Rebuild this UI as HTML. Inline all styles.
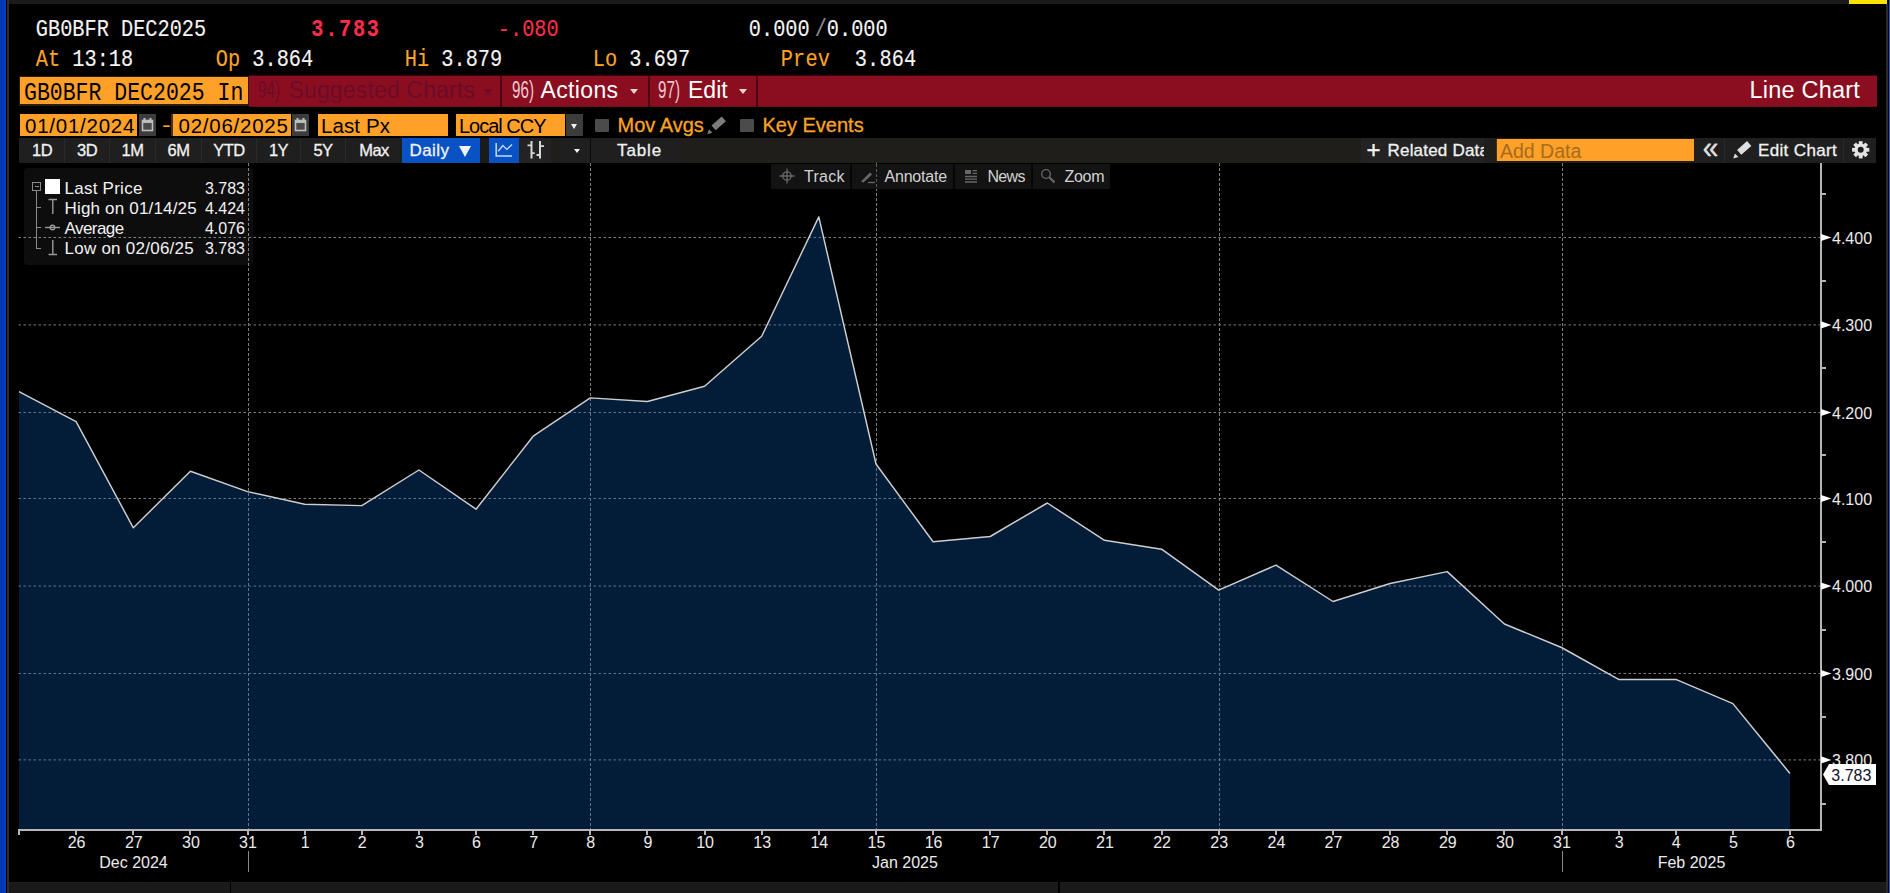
<!DOCTYPE html>
<html lang="en">
<head>
<meta charset="utf-8">
<title>GB0BFR DEC2025 Index - Line Chart</title>
<style>
html,body{margin:0;padding:0;background:#000;}
body{width:1890px;height:893px;position:relative;overflow:hidden;font-family:"Liberation Sans",sans-serif;color:#fff;}
.abs{position:absolute;}
.mono{-webkit-text-stroke:0.12px;font-family:"Liberation Mono",monospace;font-size:20.3px;line-height:24px;height:24px;white-space:pre;position:absolute;transform:scaleY(1.2);transform-origin:0 100%;letter-spacing:0;}
.w{color:#f4f4f4;}
.o{color:#fba425;}
.r{color:#ff2d4d;}
.g{color:#8a8a8a;}
.ob{position:absolute;background:#ffa028;color:#000;white-space:pre;overflow:hidden;}
.tb{position:absolute;top:138px;height:25px;background:#1f1f1f;color:#f2f2f2;font-size:16.5px;line-height:25px;text-align:center;letter-spacing:-0.5px;white-space:pre;box-sizing:border-box;border-left:1px solid #2a2a2a;-webkit-text-stroke:0.3px #f2f2f2;}
.dt{font-size:20.5px;line-height:23px;box-sizing:border-box;letter-spacing:0.75px;}
.cb{width:14px;height:13.5px;background:#4b4b4b;border-radius:1px;}
.bolder{-webkit-text-stroke:0.3px #fba425;}
.sep{position:absolute;background:#000;}
.rt{position:absolute;top:74.5px;height:31px;line-height:30px;font-size:23px;color:#fff;white-space:pre;}
.num{transform:scaleX(0.66);transform-origin:0 50%;color:#ecc9cf;}
.tri{position:absolute;width:0;height:0;border-left:4px solid transparent;border-right:4px solid transparent;border-top:5.5px solid #ead4d8;}
.ct{position:absolute;top:165px;height:25px;background:#131313;color:#d2d2d2;font-size:16px;line-height:24px;white-space:pre;}
.lg{position:absolute;font-size:17px;line-height:20px;color:#f2f2f2;white-space:pre;}
.lgv{position:absolute;font-size:16px;line-height:20px;color:#f2f2f2;white-space:pre;text-align:right;width:60px;left:185px;}
</style>
</head>
<body>
<!-- window frame -->
<div class="abs" style="left:0;top:0;width:6px;height:893px;background:linear-gradient(90deg,#0036b0,#003cc0);"></div>
<div class="abs" style="left:7px;top:0;width:2px;height:893px;background:#2c2c2c;"></div>
<div class="abs" style="left:9px;top:0;width:1877px;height:4px;background:#1a1a1a;"></div>
<div class="abs" style="left:1849px;top:0;width:38px;height:4px;background:#ffe100;"></div>
<div class="abs" style="left:1886px;top:4px;width:2px;height:889px;background:#2b2b2b;"></div>
<div class="abs" style="left:1889px;top:0;width:1px;height:893px;background:#1060e0;"></div>
<div class="abs" style="left:9px;top:882px;width:1877px;height:11px;background:#1a1a1a;border-top:1px solid #1f1f1f;box-sizing:border-box;"></div>
<div class="sep" style="left:230px;top:882px;width:1px;height:11px;"></div>
<div class="sep" style="left:1058px;top:882px;width:2px;height:11px;"></div>

<!-- header quote lines -->
<div id="h1" class="mono w" style="left:35.8px;top:20px;">GB0BFR DEC2025</div>
<div id="h2" class="mono r" style="left:311.3px;top:20px;font-weight:bold;letter-spacing:1.7px;">3.783</div>
<div id="h3" class="mono r" style="left:497.8px;top:20px;">-.080</div>
<div id="h4" class="mono w" style="left:748.8px;top:20px;">0.000</div>
<div id="h5" class="mono g" style="left:814.8px;top:20px;">/</div>
<div id="h6" class="mono w" style="left:826.8px;top:20px;">0.000</div>
<div id="h7" class="mono" style="left:35.8px;top:50px;"><span class="o">At </span><span class="w">13:18</span></div>
<div id="h8" class="mono" style="left:215.8px;top:50px;"><span class="o">Op </span><span class="w">3.864</span></div>
<div id="h9" class="mono" style="left:404.8px;top:50px;"><span class="o">Hi </span><span class="w">3.879</span></div>
<div id="h10" class="mono" style="left:592.8px;top:50px;"><span class="o">Lo </span><span class="w">3.697</span></div>
<div id="h11" class="mono" style="left:780.8px;top:50px;letter-spacing:0.15px;"><span class="o">Prev  </span><span class="w">3.864</span></div>

<!-- red command bar -->
<div class="abs" style="left:249px;top:75px;width:1628px;height:32px;background:#8a0e20;border-top:1px solid #3a060e;border-bottom:1px solid #6c0b19;box-sizing:border-box;"></div>
<div class="abs" style="left:19px;top:76px;width:230px;height:30px;background:#2e1c06;"></div>
<div class="ob" style="left:20px;top:77px;width:228px;height:27px;"></div>
<div id="sec" class="mono" style="-webkit-text-stroke:0;left:24px;top:83px;font-size:21.5px;color:#000;">GB0BFR DEC2025 In</div>
<div class="rt num" id="n94" style="left:258px;color:#6a0b28;">94)</div>
<div class="rt" id="t94" style="left:288.5px;color:#6a0b28;letter-spacing:0.15px;">Suggested Charts</div>
<div class="tri" style="left:483.5px;top:88.5px;border-top-color:#6a0b28;"></div>
<div class="sep" style="left:500px;top:76px;width:2px;height:31px;background:#4a0812;"></div>
<div class="rt num" id="n96" style="left:511.5px;">96)</div>
<div class="rt" id="t96" style="left:540.5px;letter-spacing:0.35px;">Actions</div>
<div class="tri" style="left:630px;top:88.5px;"></div>
<div class="sep" style="left:647.5px;top:76px;width:2px;height:31px;background:#4a0812;"></div>
<div class="rt num" id="n97" style="left:658px;">97)</div>
<div class="rt" id="t97" style="left:688px;letter-spacing:0px;">Edit</div>
<div class="tri" style="left:738.5px;top:88.5px;"></div>
<div class="sep" style="left:756px;top:76px;width:2px;height:31px;background:#4a0812;"></div>
<div class="rt" id="rlc" style="left:1749.5px;font-size:23.5px;letter-spacing:0.2px;">Line Chart</div>

<!-- parameter row -->
<div class="ob dt" id="d1" style="left:20px;top:114px;width:117px;height:22px;padding-left:5px;">01/01/2024</div>
<div class="abs" style="left:139px;top:114px;width:17px;height:22px;background:#3c3c3c;">
<svg width="17" height="22" viewBox="0 0 17 22"><rect x="3.5" y="6.5" width="10" height="10" fill="#4a4a4a" stroke="#bdbdbd" stroke-width="1.6"/><rect x="3" y="6" width="11" height="3" fill="#bdbdbd"/><rect x="4.5" y="4" width="2" height="3" fill="#bdbdbd"/><rect x="10.5" y="4" width="2" height="3" fill="#bdbdbd"/></svg></div>
<div class="abs o" style="left:162px;top:113px;font-size:21px;line-height:23px;transform:scaleX(1.25);transform-origin:0 0;">-</div>
<div class="abs" style="left:171px;top:114px;width:2px;height:22px;background:#4a2f08;"></div>
<div class="ob dt" id="d2" style="left:172.500px;top:114px;width:118px;height:22px;padding-left:6px;">02/06/2025</div>
<div class="abs" style="left:292px;top:114px;width:17px;height:22px;background:#3c3c3c;">
<svg width="17" height="22" viewBox="0 0 17 22"><rect x="3.5" y="6.5" width="10" height="10" fill="#4a4a4a" stroke="#bdbdbd" stroke-width="1.6"/><rect x="3" y="6" width="11" height="3" fill="#bdbdbd"/><rect x="4.5" y="4" width="2" height="3" fill="#bdbdbd"/><rect x="10.5" y="4" width="2" height="3" fill="#bdbdbd"/></svg></div>
<div class="ob" id="lp" style="left:317.500px;top:114px;width:130px;height:22px;font-size:20.5px;line-height:23px;padding-left:3.5px;box-sizing:border-box;letter-spacing:0.1px;">Last Px</div>
<div class="ob" id="lc" style="left:455.500px;top:114px;width:109.500px;height:22px;font-size:20px;line-height:24.500px;padding-left:3.5px;box-sizing:border-box;letter-spacing:-1px;">Local CCY</div>
<div class="abs" style="left:566px;top:114px;width:17px;height:22px;background:#3c3c3c;"><div class="tri" style="left:4.800px;top:9.500px;border-top-color:#f4f4f4;border-left-width:3.700px;border-right-width:3.700px;border-top-width:5px;"></div></div>
<div class="abs cb" style="left:595px;top:118.500px;"></div>
<div class="abs o bolder" id="ma" style="left:617.500px;top:113px;font-size:20px;line-height:24px;white-space:pre;">Mov Avgs</div>
<svg class="abs" style="left:705px;top:115px;" width="22" height="20" viewBox="0 0 22 20"><path d="M8.600 12.800 L18.800 3.900" stroke="#7c7c7c" stroke-width="6.400" fill="none"/><path d="M2.300 19.200 L3.900 14.200 L7.400 17.700 Z" fill="#7c7c7c"/></svg>
<div class="abs cb" style="left:740px;top:118.500px;"></div>
<div class="abs o bolder" id="ke" style="left:762.500px;top:113px;font-size:20px;line-height:24px;white-space:pre;">Key Events</div>

<!-- period toolbar -->
<div class="abs" style="left:19px;top:138px;width:1857px;height:25px;background:#201e1b;"></div>
<div class="abs" style="left:19px;top:138px;width:383px;height:25px;background:#1f1f1f;"></div>
<div class="tb" style="left:20px;width:44px;border-left:none;">1D</div>
<div class="tb" style="left:64px;width:45px;">3D</div>
<div class="tb" style="left:109px;width:46px;">1M</div>
<div class="tb" style="left:155px;width:46px;">6M</div>
<div class="tb" style="left:201px;width:55px;">YTD</div>
<div class="tb" style="left:256px;width:44px;">1Y</div>
<div class="tb" style="left:300px;width:45px;">5Y</div>
<div class="tb" style="left:345px;width:57px;">Max</div>
<div class="tb" id="daily" style="left:402px;width:78px;background:#0852c4;border:none;text-align:left;font-size:17px;letter-spacing:0.4px;"><span style="margin-left:7.500px;">Daily</span><div class="tri" style="left:57.300px;top:7.500px;border-top-color:#f4f4f4;border-left-width:6px;border-right-width:6px;border-top-width:11px;"></div></div>
<div class="abs" style="left:480px;top:138px;width:9px;height:25px;background:#1b1b1b;"></div>
<div class="tb" style="left:488.500px;width:30.500px;background:#0852c4;border:none;"><svg style="position:absolute;left:0;top:0;" width="31" height="25" viewBox="0 0 31 25"><path d="M7.200 5 V18 H23" fill="none" stroke="#c6d8f6" stroke-width="1.500"/><path d="M9.200 13.200 L13.800 7.600 L17.800 11.400 L23 6.600" fill="none" stroke="#c6d8f6" stroke-width="1.400"/></svg></div>
<div class="tb" style="left:519px;width:32px;border:none;background:#232323;"><svg style="position:absolute;left:0;top:0;" width="32" height="25" viewBox="0 0 32 25"><path d="M12.500 3 V20.500 M21 3 V20.500" fill="none" stroke="#d8d8d8" stroke-width="2"/><path d="M8.500 7.300 H12.500 M12.500 15.200 H15.700 M21 8.200 H25 M17.500 17 H21" fill="none" stroke="#d8d8d8" stroke-width="1.800"/></svg></div>
<div class="tb" style="left:560px;width:30px;border:none;background:#1f1f1f;"><div class="tri" style="left:14px;top:10.500px;border-top-color:#f4f4f4;border-left-width:3.400px;border-right-width:3.400px;border-top-width:4.800px;"></div></div>
<div class="sep" style="left:590px;top:138px;width:1px;height:25px;background:#0a0a0a;"></div>
<div class="tb" style="left:591px;width:90px;border:none;font-size:17px;letter-spacing:0.9px;text-align:left;"><span style="margin-left:26px;">Table</span></div>
<div class="tb" id="rel" style="left:1361px;width:123px;text-align:left;overflow:hidden;background:#232323;border:none;font-size:17px;letter-spacing:0.2px;"><span style="position:absolute;left:5.500px;top:-1px;font-size:24px;-webkit-text-stroke:0.4px #f2f2f2;">+</span><span style="margin-left:26.500px;">Related Data</span></div>
<div class="abs" style="left:1496px;top:139px;width:1px;height:22px;background:#4a2f08;"></div>
<div class="ob" id="ad" style="left:1497px;top:139px;width:197px;height:22px;font-size:19.500px;line-height:25px;padding-left:3px;box-sizing:border-box;color:#a56c1e;">Add Data</div>
<div class="abs" style="left:1695px;top:138px;width:181px;height:25px;background:#1f1f1f;"></div>
<div class="tb" id="chev" style="left:1697px;width:28px;border:none;font-size:31px;line-height:19px;letter-spacing:0;color:#dedede;"><span style="display:inline-block;transform:scaleX(0.9);">«</span></div>
<div class="tb" id="ec" style="left:1724px;width:119px;text-align:left;font-size:17px;letter-spacing:0.350px;"><svg style="position:absolute;left:7px;top:2px;" width="21" height="20" viewBox="0 0 21 20"><path d="M7.200 12.300 L17.200 3.500" stroke="#dedede" stroke-width="6.400" fill="none"/><path d="M1.300 18.400 L2.900 13.400 L6.400 16.900 Z" fill="#dedede"/></svg><span style="margin-left:33px;">Edit Chart</span></div>
<div class="tb" style="left:1843px;width:33px;"><svg width="33" height="25" viewBox="0 0 33 25"><g transform="translate(16.700,11.800)"><g fill="#e4e4e4"><rect x="-1.900" y="-8.600" width="3.800" height="17.200"/><rect x="-1.900" y="-8.600" width="3.800" height="17.200" transform="rotate(45)"/><rect x="-1.900" y="-8.600" width="3.800" height="17.200" transform="rotate(90)"/><rect x="-1.900" y="-8.600" width="3.800" height="17.200" transform="rotate(135)"/><circle r="6.200"/></g><circle r="3" fill="#1f1f1f"/></g></svg></div>

<svg id="chart" width="1890" height="893" viewBox="0 0 1890 893" style="position:absolute;left:0;top:0">
<line x1="18.5" y1="237.5" x2="1820" y2="237.5" stroke="#7e7e7e" stroke-width="1" stroke-dasharray="2.5 2.5"/>
<line x1="18.5" y1="324.9" x2="1820" y2="324.9" stroke="#7e7e7e" stroke-width="1" stroke-dasharray="2.5 2.5"/>
<line x1="18.5" y1="412.5" x2="1820" y2="412.5" stroke="#7e7e7e" stroke-width="1" stroke-dasharray="2.5 2.5"/>
<line x1="18.5" y1="498.5" x2="1820" y2="498.5" stroke="#7e7e7e" stroke-width="1" stroke-dasharray="2.5 2.5"/>
<line x1="18.5" y1="586.05" x2="1820" y2="586.05" stroke="#7e7e7e" stroke-width="1" stroke-dasharray="2.5 2.5"/>
<line x1="18.5" y1="673.5" x2="1820" y2="673.5" stroke="#7e7e7e" stroke-width="1" stroke-dasharray="2.5 2.5"/>
<line x1="18.5" y1="759.9" x2="1820" y2="759.9" stroke="#7e7e7e" stroke-width="1" stroke-dasharray="2.5 2.5"/>
<line x1="248.5" y1="163" x2="248.5" y2="829" stroke="#7e7e7e" stroke-width="1" stroke-dasharray="2.5 2.5" shape-rendering="crispEdges"/>
<line x1="590.5" y1="163" x2="590.5" y2="829" stroke="#7e7e7e" stroke-width="1" stroke-dasharray="2.5 2.5" shape-rendering="crispEdges"/>
<line x1="876.5" y1="163" x2="876.5" y2="829" stroke="#7e7e7e" stroke-width="1" stroke-dasharray="2.5 2.5" shape-rendering="crispEdges"/>
<line x1="1219.5" y1="163" x2="1219.5" y2="829" stroke="#7e7e7e" stroke-width="1" stroke-dasharray="2.5 2.5" shape-rendering="crispEdges"/>
<line x1="1562.5" y1="163" x2="1562.5" y2="829" stroke="#7e7e7e" stroke-width="1" stroke-dasharray="2.5 2.5" shape-rendering="crispEdges"/>
<polygon points="19.0,391.7 76.1,421.7 133.3,527.8 190.4,471.2 247.5,491.6 304.7,504.3 361.8,505.6 418.9,470.0 476.0,509.2 533.2,436.2 590.3,397.9 647.4,401.5 704.6,386.2 761.7,336.2 818.8,216.9 876.0,464.0 933.1,541.8 990.2,536.5 1047.3,503.0 1104.5,540.3 1161.6,549.2 1218.7,590.1 1275.9,565.2 1333.0,601.5 1390.1,583.5 1447.2,571.6 1504.4,624.0 1561.5,647.5 1618.6,679.4 1675.8,679.4 1732.9,703.6 1790.0,773.5 1790,829 19,829" fill="rgba(10,93,187,0.3)"/>
<polyline points="19.0,391.7 76.1,421.7 133.3,527.8 190.4,471.2 247.5,491.6 304.7,504.3 361.8,505.6 418.9,470.0 476.0,509.2 533.2,436.2 590.3,397.9 647.4,401.5 704.6,386.2 761.7,336.2 818.8,216.9 876.0,464.0 933.1,541.8 990.2,536.5 1047.3,503.0 1104.5,540.3 1161.6,549.2 1218.7,590.1 1275.9,565.2 1333.0,601.5 1390.1,583.5 1447.2,571.6 1504.4,624.0 1561.5,647.5 1618.6,679.4 1675.8,679.4 1732.9,703.6 1790.0,773.5" fill="none" stroke="#cecece" stroke-width="1.45" stroke-linejoin="round"/>
<rect x="1820" y="163" width="2" height="668" fill="#b6b6b6" shape-rendering="crispEdges"/>
<rect x="18" y="829" width="1804" height="2" fill="#b6b6b6" shape-rendering="crispEdges"/>
<rect x="18" y="829" width="2" height="6" fill="#b6b6b6" shape-rendering="crispEdges"/>
<rect x="75" y="829" width="2" height="6" fill="#b6b6b6" shape-rendering="crispEdges"/>
<rect x="132" y="829" width="2" height="6" fill="#b6b6b6" shape-rendering="crispEdges"/>
<rect x="189" y="829" width="2" height="6" fill="#b6b6b6" shape-rendering="crispEdges"/>
<rect x="247" y="829" width="2" height="6" fill="#b6b6b6" shape-rendering="crispEdges"/>
<rect x="304" y="829" width="2" height="6" fill="#b6b6b6" shape-rendering="crispEdges"/>
<rect x="361" y="829" width="2" height="6" fill="#b6b6b6" shape-rendering="crispEdges"/>
<rect x="418" y="829" width="2" height="6" fill="#b6b6b6" shape-rendering="crispEdges"/>
<rect x="475" y="829" width="2" height="6" fill="#b6b6b6" shape-rendering="crispEdges"/>
<rect x="532" y="829" width="2" height="6" fill="#b6b6b6" shape-rendering="crispEdges"/>
<rect x="589" y="829" width="2" height="6" fill="#b6b6b6" shape-rendering="crispEdges"/>
<rect x="646" y="829" width="2" height="6" fill="#b6b6b6" shape-rendering="crispEdges"/>
<rect x="704" y="829" width="2" height="6" fill="#b6b6b6" shape-rendering="crispEdges"/>
<rect x="761" y="829" width="2" height="6" fill="#b6b6b6" shape-rendering="crispEdges"/>
<rect x="818" y="829" width="2" height="6" fill="#b6b6b6" shape-rendering="crispEdges"/>
<rect x="875" y="829" width="2" height="6" fill="#b6b6b6" shape-rendering="crispEdges"/>
<rect x="932" y="829" width="2" height="6" fill="#b6b6b6" shape-rendering="crispEdges"/>
<rect x="989" y="829" width="2" height="6" fill="#b6b6b6" shape-rendering="crispEdges"/>
<rect x="1046" y="829" width="2" height="6" fill="#b6b6b6" shape-rendering="crispEdges"/>
<rect x="1103" y="829" width="2" height="6" fill="#b6b6b6" shape-rendering="crispEdges"/>
<rect x="1161" y="829" width="2" height="6" fill="#b6b6b6" shape-rendering="crispEdges"/>
<rect x="1218" y="829" width="2" height="6" fill="#b6b6b6" shape-rendering="crispEdges"/>
<rect x="1275" y="829" width="2" height="6" fill="#b6b6b6" shape-rendering="crispEdges"/>
<rect x="1332" y="829" width="2" height="6" fill="#b6b6b6" shape-rendering="crispEdges"/>
<rect x="1389" y="829" width="2" height="6" fill="#b6b6b6" shape-rendering="crispEdges"/>
<rect x="1446" y="829" width="2" height="6" fill="#b6b6b6" shape-rendering="crispEdges"/>
<rect x="1503" y="829" width="2" height="6" fill="#b6b6b6" shape-rendering="crispEdges"/>
<rect x="1561" y="829" width="2" height="6" fill="#b6b6b6" shape-rendering="crispEdges"/>
<rect x="1618" y="829" width="2" height="6" fill="#b6b6b6" shape-rendering="crispEdges"/>
<rect x="1675" y="829" width="2" height="6" fill="#b6b6b6" shape-rendering="crispEdges"/>
<rect x="1732" y="829" width="2" height="6" fill="#b6b6b6" shape-rendering="crispEdges"/>
<rect x="1789" y="829" width="2" height="6" fill="#b6b6b6" shape-rendering="crispEdges"/>
<polygon points="1821,233.90 1821,241.10 1831.5,237.50" fill="#ffffff"/>
<polygon points="1821,321.30 1821,328.50 1831.5,324.90" fill="#ffffff"/>
<polygon points="1821,408.90 1821,416.10 1831.5,412.50" fill="#ffffff"/>
<polygon points="1821,494.90 1821,502.10 1831.5,498.50" fill="#ffffff"/>
<polygon points="1821,582.45 1821,589.65 1831.5,586.05" fill="#ffffff"/>
<polygon points="1821,669.90 1821,677.10 1831.5,673.50" fill="#ffffff"/>
<polygon points="1821,756.30 1821,763.50 1831.5,759.90" fill="#ffffff"/>
<rect x="1822" y="193" width="4" height="2" fill="#b6b6b6" shape-rendering="crispEdges"/>
<rect x="1822" y="280" width="4" height="2" fill="#b6b6b6" shape-rendering="crispEdges"/>
<rect x="1822" y="367" width="4" height="2" fill="#b6b6b6" shape-rendering="crispEdges"/>
<rect x="1822" y="454" width="4" height="2" fill="#b6b6b6" shape-rendering="crispEdges"/>
<rect x="1822" y="541" width="4" height="2" fill="#b6b6b6" shape-rendering="crispEdges"/>
<rect x="1822" y="629" width="4" height="2" fill="#b6b6b6" shape-rendering="crispEdges"/>
<rect x="1822" y="716" width="4" height="2" fill="#b6b6b6" shape-rendering="crispEdges"/>
<rect x="1822" y="803" width="4" height="2" fill="#b6b6b6" shape-rendering="crispEdges"/>
<rect x="248" y="851" width="1" height="21" fill="#8a8a8a" shape-rendering="crispEdges"/>
<rect x="1562" y="851" width="1" height="21" fill="#8a8a8a" shape-rendering="crispEdges"/>
<g font-family="Liberation Sans, sans-serif" font-size="16" fill="#ececec">
<text x="76.6" y="847.5" text-anchor="middle">26</text>
<text x="133.8" y="847.5" text-anchor="middle">27</text>
<text x="190.9" y="847.5" text-anchor="middle">30</text>
<text x="248.0" y="847.5" text-anchor="middle">31</text>
<text x="305.2" y="847.5" text-anchor="middle">1</text>
<text x="362.3" y="847.5" text-anchor="middle">2</text>
<text x="419.4" y="847.5" text-anchor="middle">3</text>
<text x="476.5" y="847.5" text-anchor="middle">6</text>
<text x="533.7" y="847.5" text-anchor="middle">7</text>
<text x="590.8" y="847.5" text-anchor="middle">8</text>
<text x="647.9" y="847.5" text-anchor="middle">9</text>
<text x="705.1" y="847.5" text-anchor="middle">10</text>
<text x="762.2" y="847.5" text-anchor="middle">13</text>
<text x="819.3" y="847.5" text-anchor="middle">14</text>
<text x="876.5" y="847.5" text-anchor="middle">15</text>
<text x="933.6" y="847.5" text-anchor="middle">16</text>
<text x="990.7" y="847.5" text-anchor="middle">17</text>
<text x="1047.8" y="847.5" text-anchor="middle">20</text>
<text x="1105.0" y="847.5" text-anchor="middle">21</text>
<text x="1162.1" y="847.5" text-anchor="middle">22</text>
<text x="1219.2" y="847.5" text-anchor="middle">23</text>
<text x="1276.4" y="847.5" text-anchor="middle">24</text>
<text x="1333.5" y="847.5" text-anchor="middle">27</text>
<text x="1390.6" y="847.5" text-anchor="middle">28</text>
<text x="1447.8" y="847.5" text-anchor="middle">29</text>
<text x="1504.9" y="847.5" text-anchor="middle">30</text>
<text x="1562.0" y="847.5" text-anchor="middle">31</text>
<text x="1619.1" y="847.5" text-anchor="middle">3</text>
<text x="1676.3" y="847.5" text-anchor="middle">4</text>
<text x="1733.4" y="847.5" text-anchor="middle">5</text>
<text x="1790.5" y="847.5" text-anchor="middle">6</text>
<text x="1832" y="243.50">4.400</text>
<text x="1832" y="330.90">4.300</text>
<text x="1832" y="418.50">4.200</text>
<text x="1832" y="504.50">4.100</text>
<text x="1832" y="592.05">4.000</text>
<text x="1832" y="679.50">3.900</text>
<text x="1832" y="765.90">3.800</text>
<text x="133.5" y="868" text-anchor="middle">Dec 2024</text>
<text x="905" y="868" text-anchor="middle">Jan 2025</text>
<text x="1691.5" y="868" text-anchor="middle">Feb 2025</text>
</g>
<polygon points="1823,774.5 1829,764 1876,764 1876,785 1829,785" fill="#ffffff"/>
<text x="1831.3" y="780.5" font-family="Liberation Sans, sans-serif" font-size="16" fill="#10102a">3.783</text>
</svg>

<!-- chart tools -->
<div class="abs" style="left:771px;top:164px;width:339px;height:25px;background:#131313;"></div>
<svg class="abs" style="left:876px;top:164px;" width="1" height="25"><line x1="0.5" y1="0" x2="0.5" y2="25" stroke="#5a5a5a" stroke-width="1" stroke-dasharray="3 2" shape-rendering="crispEdges"/></svg>
<div class="sep" style="left:850px;top:164px;width:2px;height:25px;background:#050505;"></div>
<div class="sep" style="left:953px;top:164px;width:2px;height:25px;background:#050505;"></div>
<div class="sep" style="left:1031px;top:164px;width:2px;height:25px;background:#050505;"></div>
<svg class="abs" style="left:778px;top:167px;" width="18" height="18" viewBox="0 0 18 18"><circle cx="9" cy="9" r="4.2" fill="none" stroke="#686868" stroke-width="1.3"/><path d="M9 1.5 V16.5 M1.5 9 H16.5" stroke="#686868" stroke-width="1.3"/></svg>
<div class="ct" style="left:804px;background:none;letter-spacing:0.3px;">Track</div>
<svg class="abs" style="left:858px;top:167px;" width="20" height="18" viewBox="0 0 20 18"><path d="M3 14.5 L12 5.5 L14 7.5 L5.5 15.5 Z" fill="#686868"/><path d="M10 15.5 H17" stroke="#666" stroke-width="1.3"/></svg>
<div class="ct" style="left:884.500px;background:none;letter-spacing:-0.2px;">Annotate</div>
<svg class="abs" style="left:962px;top:167px;" width="18" height="18" viewBox="0 0 18 18"><rect x="3" y="3" width="6" height="4" fill="#686868"/><path d="M10.5 3.7 H15 M10.5 6.3 H15 M3 9.5 H15 M3 12.2 H15 M3 15 H15" stroke="#686868" stroke-width="1.3"/></svg>
<div class="ct" style="left:987.500px;background:none;letter-spacing:-0.7px;">News</div>
<svg class="abs" style="left:1039px;top:167px;" width="18" height="18" viewBox="0 0 18 18"><circle cx="7" cy="7" r="4.3" fill="none" stroke="#686868" stroke-width="1.3"/><path d="M10.3 10.3 L15.5 15.5" stroke="#686868" stroke-width="2.2"/></svg>
<div class="ct" style="left:1064.500px;background:none;letter-spacing:-0.3px;">Zoom</div>

<!-- legend -->
<div class="abs" style="left:24px;top:168px;width:229px;height:97px;background:rgba(255,255,255,0.052);border-radius:4px;"></div>
<svg class="abs" style="left:24px;top:168px;" width="229" height="97" viewBox="0 0 229 97">
<g fill="none" stroke="#8a8a8a" stroke-width="1" shape-rendering="crispEdges">
<rect x="8.5" y="14.5" width="8" height="8"/><path d="M10.5 18.5 H14.5"/>
<path d="M12.5 23 V80.500 H17 M12.5 39.500 H17 M12.5 59.500 H17"/>
</g>
<rect x="21" y="11" width="15" height="15" fill="#ffffff"/>
<g stroke="#9a9a9a" stroke-width="1.4" fill="none">
<path d="M24.5 31.500 H33 M28.800 31.500 V46"/>
<path d="M21 59.500 H36"/><circle cx="28.500" cy="59.500" r="2.300"/>
<path d="M28.800 72 V86 M24.500 86.500 H33"/>
</g>
</svg>
<div class="lg" style="left:64.500px;top:178.500px;letter-spacing:0.25px;">Last Price</div><div class="lgv" style="top:178.500px;">3.783</div>
<div class="lg" style="left:64.500px;top:198.800px;letter-spacing:0.18px;">High on 01/14/25</div><div class="lgv" style="top:198.800px;">4.424</div>
<div class="lg" style="left:64.500px;top:218.900px;letter-spacing:-0.55px;">Average</div><div class="lgv" style="top:218.900px;">4.076</div>
<div class="lg" style="left:64.500px;top:239px;letter-spacing:0.25px;">Low on 02/06/25</div><div class="lgv" style="top:239px;">3.783</div>
</body>
</html>
